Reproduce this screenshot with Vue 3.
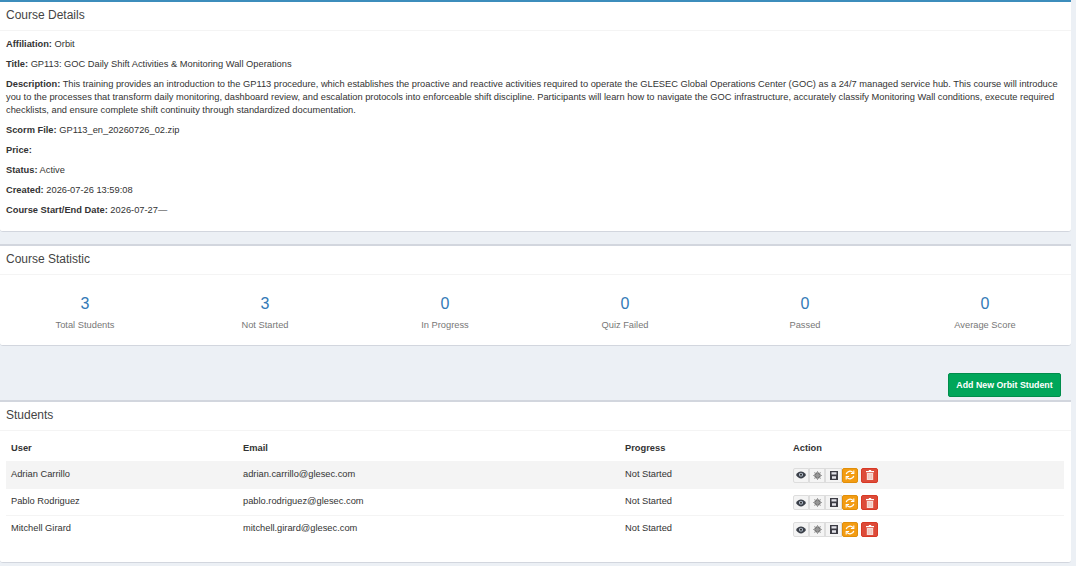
<template>
  <div class="page">
    <section class="box first">
      <div class="box-header"><h3>Course Details</h3></div>
      <div class="box-body details">
        <p><b>Affiliation:</b> Orbit</p>
        <p><b>Title:</b> GP113: GOC Daily Shift Activities &amp; Monitoring Wall Operations</p>
        <p><b>Description:</b> This training provides an introduction to the GP113 procedure, which establishes the proactive and reactive activities required to operate the GLESEC Global Operations Center (GOC) as a 24/7 managed service hub. This course will introduce you to the processes that transform daily monitoring, dashboard review, and escalation protocols into enforceable shift discipline. Participants will learn how to navigate the GOC infrastructure, accurately classify Monitoring Wall conditions, execute required checklists, and ensure complete shift continuity through standardized documentation.</p>
        <p><b>Scorm File:</b> GP113_en_20260726_02.zip</p>
        <p><b>Price:</b></p>
        <p><b>Status:</b> Active</p>
        <p><b>Created:</b> 2026-07-26 13:59:08</p>
        <p><b>Course Start/End Date:</b> 2026-07-27—</p>
      </div>
    </section>

    <section class="box">
      <div class="box-header"><h3>Course Statistic</h3></div>
      <div class="stats">
        <div v-for="s in stats" :key="s.label" class="stat">
          <div class="num">{{ s.value }}</div>
          <div class="label">{{ s.label }}</div>
        </div>
      </div>
    </section>

    <div class="add-row">
      <button class="btn-add">Add New Orbit Student</button>
    </div>

    <section class="box students">
      <div class="box-header"><h3>Students</h3></div>
      <div class="table-wrap">
        <table>
          <thead>
            <tr>
              <th class="c-user">User</th>
              <th class="c-email">Email</th>
              <th class="c-prog">Progress</th>
              <th>Action</th>
            </tr>
          </thead>
          <tbody>
            <tr v-for="u in users" :key="u.email">
              <td>{{ u.name }}</td>
              <td>{{ u.email }}</td>
              <td>Not Started</td>
              <td>
                <div class="actions">
                  <span class="ib">
                    <svg width="10" height="8" viewBox="0 0 10 8"><path d="M0 4C1.500 1.600 3.200.6 5 .6S8.500 1.600 10 4C8.500 6.400 6.800 7.400 5 7.400S1.500 6.400 0 4Z" fill="#3a3f48"/><circle cx="5" cy="3.700" r="1.900" fill="#c9d6e6"/><circle cx="5" cy="3.700" r="1.100" fill="#333"/></svg>
                  </span>
                  <span class="ib">
                    <svg width="9" height="9" viewBox="0 0 9 9"><circle cx="4.500" cy="4.500" r="3.200" fill="#777"/><path d="M4.500 0v9M0 4.500h9M1.300 1.300l6.400 6.400M7.700 1.300L1.300 7.700" stroke="#999" stroke-width=".9"/></svg>
                  </span>
                  <span class="ib wide">
                    <svg width="8" height="9" viewBox="0 0 8 9"><path d="M0 0h8v9H0Z" fill="#3c3c44"/><path d="M1.500 1.200h5v2.300h-5ZM2 5.300h4v2.500H2Z" fill="#e4e4ea"/></svg>
                  </span>
                  <span class="ib orange">
                    <svg width="10" height="10" viewBox="0 0 10 10" fill="none" stroke="#fff" stroke-width="1.300"><path d="M1.200 4.200A3.900 3.900 0 0 1 8 2.600"/><path d="M8.800 5.800A3.900 3.900 0 0 1 2 7.400"/><path d="M8.800.6v2.900H5.900M1.200 9.400V6.500h2.900" stroke-width="1.100"/></svg>
                  </span>
                  <span class="ib red">
                    <svg width="8" height="10" viewBox="0 0 8 10"><path d="M2.800 0h2.400v1H8v1.200H0V1h2.800Z" fill="#fff"/><path d="M.8 3h6.400v7H.8Z" fill="#f6dcd6"/><path d="M2.500 4v5M4 4v5M5.500 4v5" stroke="#eeb7ad" stroke-width=".6"/></svg>
                  </span>
                </div>
              </td>
            </tr>
          </tbody>
        </table>
      </div>
    </section>
  </div>
</template>

<script setup>
const stats = [
  { value: 3, label: 'Total Students' },
  { value: 3, label: 'Not Started' },
  { value: 0, label: 'In Progress' },
  { value: 0, label: 'Quiz Failed' },
  { value: 0, label: 'Passed' },
  { value: 0, label: 'Average Score' }
]

const users = [
  { name: 'Adrian Carrillo', email: 'adrian.carrillo@glesec.com' },
  { name: 'Pablo Rodriguez', email: 'pablo.rodriguez@glesec.com' },
  { name: 'Mitchell Girard', email: 'mitchell.girard@glesec.com' }
]
</script>

<style>
html, body { background: #ecf0f5; overflow: hidden; }
</style>

<style scoped>
.page {
  width: 1071px;
  height: 566px;
  overflow: hidden;
  font-family: "Liberation Sans", Arial, sans-serif;
  font-size: 9.3px;
  color: #333;
  background: #ecf0f5;
}
.box {
  background: #fff;
  border-top: 2px solid #d2d6de;
  border-bottom: 1px solid #d2d6de;
  border-radius: 0 0 3px 3px;
  margin-bottom: 12px;
}
.box.first { border-top: 2px solid #3c8dbc; }
.box-header {
  height: 29px;
  box-sizing: border-box;
  border-bottom: 1px solid #f4f4f4;
  padding: 0 0 2px 6px;
  display: flex;
  align-items: center;
}
h3 {
  margin: 0;
  font-size: 12px;
  font-weight: 400;
  color: #444;
}
.details { padding: 7px 6px 0; height: 200px; box-sizing: border-box; }
.details p { margin: 0 0 7px; line-height: 13px; }
.stats { display: flex; height: 70px; margin: 0 -4px 0 -5px; }
.stat { flex: 1; text-align: center; padding-top: 19px; }
.num { font-size: 16px; line-height: 19px; color: #337ab7; }
.label { color: #777; margin-top: 6px; line-height: 12px; }
.add-row {
  display: flex;
  justify-content: flex-end;
  padding: 15px 10px 3px 0;
}
.btn-add {
  height: 24px;
  width: 113px;
  padding: 0;
  font: bold 8.8px "Liberation Sans", Arial, sans-serif;
  color: #fff;
  background: #00a65a;
  border: 1px solid #008d4c;
  border-radius: 2px;
}
.students { margin-bottom: 0; height: 163px; box-sizing: border-box; }
.table-wrap { padding: 5px 6px; }
table { width: 1058px; border-collapse: collapse; table-layout: fixed; }
th { text-align: left; font-weight: 700; height: 25px; padding: 0 5px 1px; box-sizing: border-box; }
.c-user { width: 232px; }
.c-email { width: 382px; }
.c-prog { width: 168px; }
td { height: 27px; padding: 0 5px 1px; border-top: 1px solid #f4f4f4; box-sizing: border-box; }
tbody tr:first-child { background: #f4f4f4; }
tbody tr:first-child td { border-top: 0; }
.actions { display: flex; align-items: center; padding-top: 3px; }
.ib {
  width: 16px;
  height: 15px;
  box-sizing: border-box;
  display: inline-flex;
  align-items: center;
  justify-content: center;
  background: #f4f4f4;
  border: 1px solid #ddd;
}
.ib:first-child { border-radius: 2px 0 0 2px; }
.wide { width: 17px; }
.orange { background: #f39c12; border-color: #e08e0b; border-radius: 2px; }
.red { background: #dd4b39; border-color: #d73925; border-radius: 2px; margin-left: 3px; width: 17px; }
</style>
